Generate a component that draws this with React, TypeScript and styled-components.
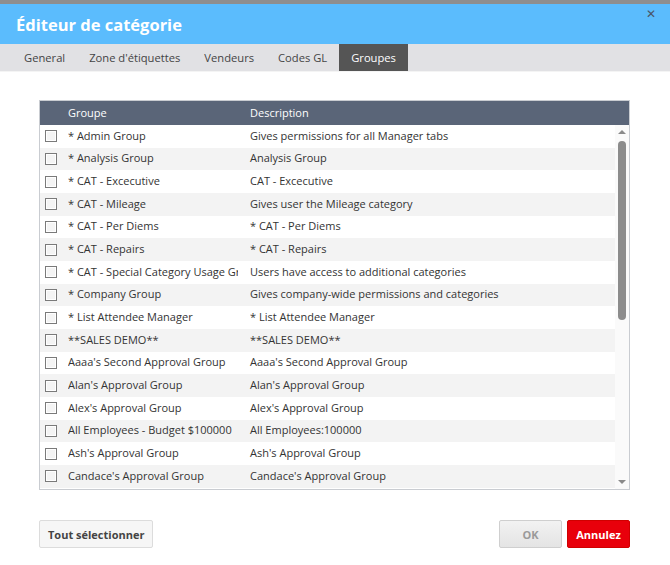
import React from 'react';
import styled, { createGlobalStyle } from 'styled-components';

const GlobalStyle = createGlobalStyle`
  html, body {
    margin: 0;
    padding: 0;
    background: #ffffff;
  }
  body {
    font-family: "Open Sans", "Liberation Sans", sans-serif;
    color: #333;
  }
`;

const Dialog = styled.div`
  width: 670px;
  height: 565px;
  display: flex;
  flex-direction: column;
  background: #fff;
  overflow: hidden;
`;

const TitleBar = styled.div`
  height: 40px;
  border-top: 4px solid #8e8e8e;
  background: #5bbcfd;
  display: flex;
  align-items: center;
  justify-content: space-between;
  padding: 0 16px;
`;

const Title = styled.h1`
  margin: 0;
  font-size: 16.5px;
  font-weight: 700;
  color: #fff;
`;

const Close = styled.button`
  align-self: flex-start;
  margin-top: 4px;
  margin-right: -2px;
  border: none;
  background: none;
  padding: 0;
  color: #4a5566;
  font-size: 12px;
  line-height: 1;
  cursor: pointer;
`;

const TabBar = styled.div`
  height: 27px;
  background: #e1e1e4;
  display: flex;
  padding-left: 12px;
  border-bottom: 1px solid #f4f4f4;
`;

const Tab = styled.div<{ active?: boolean }>`
  padding: 0 12px;
  display: flex;
  align-items: center;
  font-size: 11.2px;
  color: ${p => (p.active ? '#fff' : '#444')};
  background: ${p => (p.active ? '#555555' : 'transparent')};
`;

const Body = styled.div`
  padding: 28px 40px 0 39px;
  display: flex;
  flex-direction: column;
`;

const Table = styled.div`
  border: 1px solid #c9ccd1;
  display: flex;
  flex-direction: column;
`;

const columns = `
  display: grid;
  grid-template-columns: 28px 170px 1fr;
  align-items: center;
  font-size: 11px;
`;

const HeaderRow = styled.div`
  ${columns}
  height: 24px;
  padding-bottom: 1px;
  box-sizing: border-box;
  background: #5a6578;
  color: #fff;
`;

const Main = styled.div`
  height: 364px;
  display: flex;
`;

const Rows = styled.div`
  flex: 1;
  display: flex;
  flex-direction: column;
`;

const Row = styled.div<{ alt: boolean }>`
  ${columns}
  height: 22.67px;
  flex-shrink: 0;
  color: #333;
  background: ${p => (p.alt ? '#f3f3f3' : '#fff')};
  white-space: nowrap;
`;

const Cell = styled.span<{ desc?: boolean }>`
  overflow: hidden;
  padding-left: ${p => (p.desc ? '12px' : '0')};
  margin-top: -2px;
`;

const HeadCell = styled.span<{ desc?: boolean }>`
  padding-left: ${p => (p.desc ? '12px' : '0')};
`;

const Check = styled.span`
  width: 10px;
  height: 10px;
  margin-left: 5px;
  border: 1px solid #7a7a7a;
  background: #f4f4f4;
  box-shadow: inset 0 0 0 1px #fff;
`;

const Track = styled.div`
  width: 14px;
  background: #fafafa;
  display: flex;
  flex-direction: column;
  align-items: center;
`;

const Arrow = styled.div<{ down?: boolean }>`
  width: 0;
  height: 0;
  margin: ${p => (p.down ? 'auto 0 5px' : '5px 0 7px')};
  border-left: 4px solid transparent;
  border-right: 4px solid transparent;
  ${p => (p.down ? 'border-top: 4px solid #8a8a8a;' : 'border-bottom: 4px solid #8a8a8a;')}
`;

const Thumb = styled.div`
  width: 8px;
  height: 179px;
  border-radius: 4px;
  background: #8c8c8c;
`;

const Footer = styled.div`
  margin-top: 30px;
  display: flex;
  align-items: center;
  gap: 5px;
`;

const Button = styled.button<{ variant?: 'plain' | 'disabled' | 'danger' }>`
  height: 28px;
  padding: 0 ${p => (p.variant === 'plain' ? '8px' : '0')};
  min-width: ${p => (p.variant === 'plain' ? '0' : '63px')};
  font-family: "Open Sans", "Liberation Sans", sans-serif;
  font-size: 11px;
  font-weight: 700;
  border-radius: 2px;
  cursor: pointer;
  ${p => {
    switch (p.variant) {
      case 'danger':
        return `
          background: #e8000b;
          border: 1px solid #d00000;
          color: #fff;
        `;
      case 'disabled':
        return `
          background: linear-gradient(#f2f2f2, #e4e4e4);
          border: 1px solid #cfcfcf;
          color: #9a9a9a;
        `;
      default:
        return `
          background: #f6f6f6;
          border: 1px solid #dcdcdc;
          color: #444;
        `;
    }
  }}
`;

const Spacer = styled.div`
  flex: 1;
`;

const groups: [string, string][] = [
  ['* Admin Group', 'Gives permissions for all Manager tabs'],
  ['* Analysis Group', 'Analysis Group'],
  ['* CAT - Excecutive', 'CAT - Excecutive'],
  ['* CAT - Mileage', 'Gives user the Mileage category'],
  ['* CAT - Per Diems', '* CAT - Per Diems'],
  ['* CAT - Repairs', '* CAT - Repairs'],
  ['* CAT - Special Category Usage Group', 'Users have access to additional categories'],
  ['* Company Group', 'Gives company-wide permissions and categories'],
  ['* List Attendee Manager', '* List Attendee Manager'],
  ['**SALES DEMO**', '**SALES DEMO**'],
  ["Aaaa's Second Approval Group", "Aaaa's Second Approval Group"],
  ["Alan's Approval Group", "Alan's Approval Group"],
  ["Alex's Approval Group", "Alex's Approval Group"],
  ['All Employees - Budget $100000', 'All Employees:100000'],
  ["Ash's Approval Group", "Ash's Approval Group"],
  ["Candace's Approval Group", "Candace's Approval Group"],
];

const tabs = ['General', "Zone d'étiquettes", 'Vendeurs', 'Codes GL', 'Groupes'];

const App: React.FC = () => {
  return (
    <Dialog>
      <GlobalStyle />
      <TitleBar>
        <Title>Éditeur de catégorie</Title>
        <Close>✕</Close>
      </TitleBar>

      <TabBar>
        {tabs.map(t => (
          <Tab key={t} active={t === 'Groupes'}>{t}</Tab>
        ))}
      </TabBar>

      <Body>
        <Table>
          <HeaderRow>
            <span />
            <HeadCell>Groupe</HeadCell>
            <HeadCell desc>Description</HeadCell>
          </HeaderRow>
          <Main>
            <Rows>
              {groups.map(([name, desc], i) => (
                <Row key={name} alt={i % 2 === 1}>
                  <Check />
                  <Cell>{name}</Cell>
                  <Cell desc>{desc}</Cell>
                </Row>
              ))}
            </Rows>
            <Track>
              <Arrow />
              <Thumb />
              <Arrow down />
            </Track>
          </Main>
        </Table>

        <Footer>
          <Button variant="plain">Tout sélectionner</Button>
          <Spacer />
          <Button variant="disabled">OK</Button>
          <Button variant="danger">Annulez</Button>
        </Footer>
      </Body>
    </Dialog>
  );
};

export default App;
